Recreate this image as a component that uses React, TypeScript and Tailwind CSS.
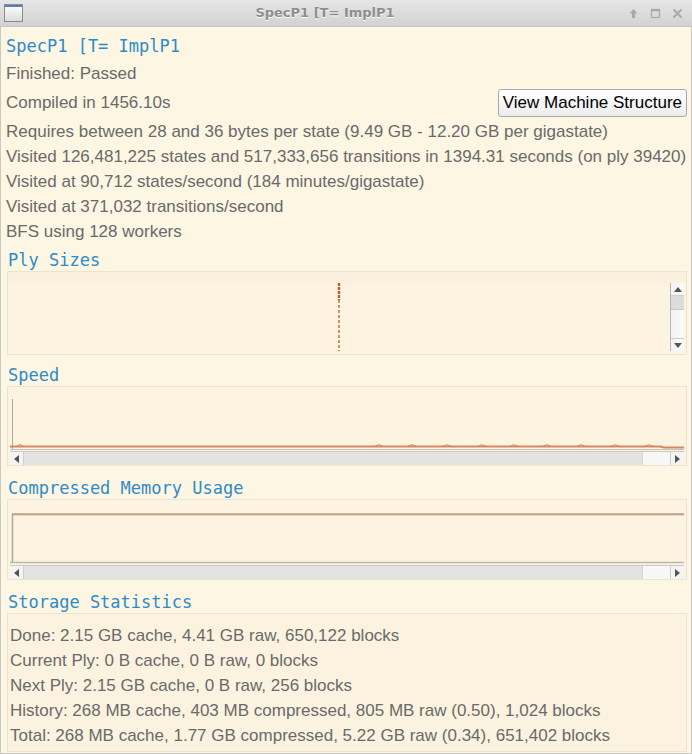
import React from "react";

const sans = { fontFamily: '"Liberation Sans", Arial, sans-serif' };
const mono = { fontFamily: '"DejaVu Sans Mono", monospace' };

function Header({ children, h }: { children: React.ReactNode; h: string }) {
  return (
    <div className={`${h} flex items-end pl-[7px] pb-px`}>
      <span className="text-[17px] leading-[20px] text-[#2f8bc8]" style={mono}>
        {children}
      </span>
    </div>
  );
}

function Line({ children }: { children: React.ReactNode }) {
  return <div className="h-[25px] leading-[25px] whitespace-nowrap">{children}</div>;
}

function HScroll() {
  return (
    <div className="h-[14px] mx-[2px] flex border-t border-[#c9c9c3] bg-[#e3e3e1]">
      <div className="w-[14px] flex items-center justify-center bg-[#f4f4f2] border-r border-[#cfcfcf]">
        <span className="block w-0 h-0 border-y-[4px] border-y-transparent border-r-[5px] border-r-[#555]" />
      </div>
      <div className="flex-1 flex justify-end">
        <div className="w-[28px] bg-[#f7f7f5] border-l border-[#d8d8d4]" />
      </div>
      <div className="w-[14px] flex items-center justify-center bg-[#f4f4f2] border-l border-[#cfcfcf]">
        <span className="block w-0 h-0 border-y-[4px] border-y-transparent border-l-[5px] border-l-[#555]" />
      </div>
    </div>
  );
}

function Box({ h, children }: { h: string; children: React.ReactNode }) {
  return (
    <div className={`${h} ml-[6px] mr-[4px] border border-[#ebe4d0] bg-[#fcf4e1] flex flex-col`}>
      {children}
    </div>
  );
}

export default function App() {
  const bumps = [371, 404, 439, 474, 506, 539, 573, 607, 641];
  return (
    <div className="w-[692px] h-[754px] bg-[#fdf6e3] flex flex-col overflow-hidden text-[17px] text-[#6a6a6a]" style={sans}>
      {/* title bar */}
      <div className="h-[27px] shrink-0 flex items-center px-[4px] bg-gradient-to-b from-[#e6e6e6] to-[#d2d2d2] border-b border-[#c4c4c4]">
        <div className="w-[19px] h-[18px] border border-[#8c8c8c] bg-gradient-to-b from-white to-[#dcdcdc] flex flex-col">
          <div className="h-[2px] bg-[#5a7fb8]" />
        </div>
        <div className="flex-1 text-center text-[13px] font-bold text-[#8e8e8e] [text-shadow:0_1px_0_#fff]" style={{ fontFamily: '"DejaVu Sans", sans-serif' }}>
          SpecP1 [T= ImplP1
        </div>
        <div className="flex items-center gap-[9px] pr-[4px]">
          <svg width="13" height="13" viewBox="0 0 13 13">
            <path d="M6.5 2 L2.5 6.5 H5 V11 H8 V6.5 H10.5 Z" fill="#a8a8a8" />
          </svg>
          <svg width="13" height="13" viewBox="0 0 13 13">
            <rect x="2.5" y="2.5" width="8" height="8" fill="none" stroke="#a8a8a8" strokeWidth="1.2" />
            <rect x="2.5" y="2.5" width="8" height="1.8" fill="#a8a8a8" />
          </svg>
          <svg width="13" height="13" viewBox="0 0 13 13">
            <path d="M2.5 2.5 L10.5 10.5 M10.5 2.5 L2.5 10.5" stroke="#a8a8a8" strokeWidth="2" />
          </svg>
        </div>
      </div>

      {/* body */}
      <div className="flex-1 flex flex-col border-x border-[#c8c8c4] border-b">
        <div className="pl-[5px]">
          <div className="h-[34px] pt-[7px]">
            <div className="text-[17px] leading-[24px] text-[#2f8bc8]" style={mono}>
              SpecP1 [T= ImplP1
            </div>
          </div>
          <Line>Finished: Passed</Line>
          <div className="h-[33px] flex items-center justify-between pr-[4px]">
            <span>Compiled in 1456.10s</span>
            <button className="h-[28px] px-[4px] border border-[#a9a9a9] rounded-[3px] bg-gradient-to-b from-white to-[#ececec] text-black text-[17px]" style={sans}>
              View Machine Structure
            </button>
          </div>
          <Line>Requires between 28 and 36 bytes per state (9.49 GB - 12.20 GB per gigastate)</Line>
          <Line>Visited 126,481,225 states and 517,333,656 transitions in 1394.31 seconds (on ply 39420)</Line>
          <Line>Visited at 90,712 states/second (184 minutes/gigastate)</Line>
          <Line>Visited at 371,032 transitions/second</Line>
          <Line>BFS using 128 workers</Line>
        </div>

        <Header h="h-[27px]">Ply Sizes</Header>
        <Box h="h-[84px]">
          <div className="h-[11px] bg-[#f9f1de]" />
          <div className="flex-1 flex pr-[2px]">
            <div className="flex-1 relative">
              <svg className="absolute inset-0" width="100%" height="100%">
                <line x1="331" y1="0" x2="331" y2="17" stroke="#c0582a" strokeWidth="2.4" strokeDasharray="3 1" />
                <line x1="331" y1="17" x2="331" y2="70" stroke="#d06a3c" strokeWidth="1.5" strokeDasharray="3 2" />
              </svg>
            </div>
            <div className="w-[14px] flex flex-col border-l border-[#b5b5b5] bg-gradient-to-r from-[#f2f2f2] to-[#fafafa]">
              <div className="h-[13px] flex items-center justify-center border-b border-[#cfcfcf]">
                <span className="block w-0 h-0 border-x-[4px] border-x-transparent border-b-[5px] border-b-[#555]" />
              </div>
              <div className="h-[14px] bg-[#dcdcdc] border-b border-[#c8c8c8]" />
              <div className="flex-1" />
              <div className="h-[13px] flex items-center justify-center border-t border-[#cfcfcf]">
                <span className="block w-0 h-0 border-x-[4px] border-x-transparent border-t-[5px] border-t-[#555]" />
              </div>
            </div>
          </div>
          <div className="h-[3px]" />
        </Box>

        <Header h="h-[31px]">Speed</Header>
        <Box h="h-[80px]">
          <div className="h-[12px]" />
          <div className="h-[52px] relative">
            <svg className="absolute inset-0" width="100%" height="100%">
              <line x1="4.5" y1="0" x2="4.5" y2="50" stroke="#a9a99c" strokeWidth="1" />
              <line x1="2" y1="50.5" x2="676" y2="50.5" stroke="#c2c2b8" strokeWidth="1" />
              <path d="M2 47.5 H652 L656 48.5 H676" stroke="#d38a62" strokeWidth="2" fill="none" />
              <path d="M9 47 Q12 44 15 47" stroke="#d38a62" strokeWidth="1" fill="none" />
              {bumps.map((b) => (
                <path key={b} d={`M${b - 4} 47 Q${b} 44.5 ${b + 4} 47`} stroke="#d38a62" strokeWidth="1" fill="none" />
              ))}
            </svg>
          </div>
          <HScroll />
        </Box>

        <Header h="h-[33px]">Compressed Memory Usage</Header>
        <Box h="h-[81px]">
          <div className="h-[13px]" />
          <div className="h-[53px] relative">
            <svg className="absolute inset-0" width="100%" height="100%">
              <line x1="4.5" y1="1" x2="4.5" y2="50" stroke="#a9a99c" strokeWidth="1.5" />
              <line x1="4" y1="1" x2="676" y2="1" stroke="#a4ad90" strokeWidth="1.5" />
              <line x1="4" y1="1.8" x2="676" y2="1.8" stroke="#dc8a74" strokeWidth="1" />
              <line x1="2" y1="49.5" x2="676" y2="49.5" stroke="#b8b8ac" strokeWidth="1.5" />
            </svg>
          </div>
          <HScroll />
        </Box>

        <Header h="h-[33px]">Storage Statistics</Header>
        <div className="h-[139px] ml-[6px] mr-[4px] border border-[#ebe4d0] bg-[#fbf3e0] pt-[9px] pl-[2px]">
          <Line>Done: 2.15 GB cache, 4.41 GB raw, 650,122 blocks</Line>
          <Line>Current Ply: 0 B cache, 0 B raw, 0 blocks</Line>
          <Line>Next Ply: 2.15 GB cache, 0 B raw, 256 blocks</Line>
          <Line>History: 268 MB cache, 403 MB compressed, 805 MB raw (0.50), 1,024 blocks</Line>
          <Line>Total: 268 MB cache, 1.77 GB compressed, 5.22 GB raw (0.34), 651,402 blocks</Line>
        </div>
      </div>
    </div>
  );
}
